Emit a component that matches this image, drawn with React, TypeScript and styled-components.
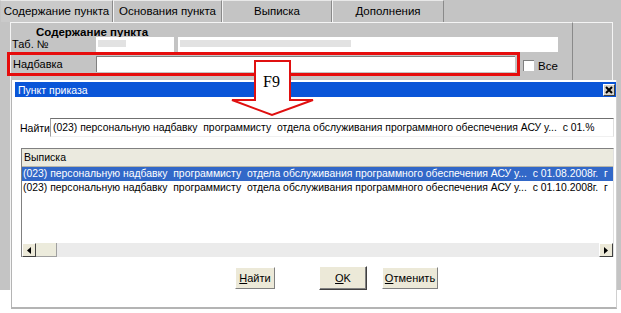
import React from "react";
import styled, { createGlobalStyle } from "styled-components";

const GlobalStyle = createGlobalStyle`
  html, body {
    margin: 0;
    padding: 0;
    background: #fff;
    font-family: "Liberation Sans", Arial, sans-serif;
  }
`;

const findText =
  "(023) персональную надбавку  программисту  отдела обслуживания программного обеспечения АСУ у...  с 01.%";

const rows = [
  "(023) персональную надбавку  программисту  отдела обслуживания программного обеспечения АСУ у...  с 01.08.2008г.  г",
  "(023) персональную надбавку  программисту  отдела обслуживания программного обеспечения АСУ у...  с 01.10.2008г.  г",
];

const tabs = [
  { title: "Содержание пункта", width: 113 },
  { title: "Основания пункта", width: 109 },
  { title: "Выписка", width: 110 },
  { title: "Дополнения", width: 112 },
];

const App: React.FC = () => {
  return (
    <Screen>
      <GlobalStyle />
      <MainWindow>
        <TabBar>
          {tabs.map((t, i) => (
            <Tab key={t.title} $width={t.width} $active={i === 0}>
              {t.title}
            </Tab>
          ))}
        </TabBar>
        <Body>
          <InnerPanel>
            <SectionTitle>Содержание пункта</SectionTitle>
            <FieldRow>
              <Label>Таб. №</Label>
              <Field $width={78}>
                <Redacted $width={28} />
              </Field>
              <Field $width={380} $gap={4}>
                <Redacted $width={171} />
              </Field>
            </FieldRow>
            <HighlightRow>
              <Highlight>
                <Label $width={83}>Надбавка</Label>
                <TextInput />
              </Highlight>
              <CheckBox />
              <CheckLabel>Все</CheckLabel>
            </HighlightRow>
          </InnerPanel>
          <RightColumn />
        </Body>
      </MainWindow>

      <Dialog>
        <TitleBar>
          <span>Пункт приказа</span>
          <CloseButton>
            <svg width="8" height="8" viewBox="0 0 8 8">
              <path d="M1 1 L7 7 M7 1 L1 7" stroke="#000" strokeWidth="2" />
            </svg>
          </CloseButton>
        </TitleBar>
        <FindRow>
          <FindLabel>Найти</FindLabel>
          <FindInput>{findText}</FindInput>
        </FindRow>
        <ListBox>
          <ListHeader>Выписка</ListHeader>
          {rows.map((r, i) => (
            <ListRow key={i} $selected={i === 0}>
              {r}
            </ListRow>
          ))}
          <ListSpacer />
          <ScrollBar>
            <ScrollButton>
              <svg width="4" height="7" viewBox="0 0 4 7">
                <path d="M4 0 L0 3.5 L4 7 Z" fill="#000" />
              </svg>
            </ScrollButton>
            <ScrollThumb />
            <ScrollTrack />
            <ScrollButton>
              <svg width="4" height="7" viewBox="0 0 4 7">
                <path d="M0 0 L4 3.5 L0 7 Z" fill="#000" />
              </svg>
            </ScrollButton>
          </ScrollBar>
        </ListBox>
        <ButtonRow>
          <Button $width={40}>
            <u>Н</u>айти
          </Button>
          <Button $width={48} $gap={44} $default>
            <u>O</u>K
          </Button>
          <Button $width={56} $gap={15}>
            <u>О</u>тменить
          </Button>
        </ButtonRow>
      </Dialog>

      <Arrow width="86" height="60" viewBox="0 0 86 60">
        <polygon
          points="25,2 60,2 60,41 83,41 42,56 2,41 25,41"
          fill="#fff"
          stroke="#e01010"
          strokeWidth="2"
        />
        <text x="33" y="28" fontFamily="'Liberation Serif', serif" fontSize="16" fill="#000">
          F9
        </text>
      </Arrow>
    </Screen>
  );
};

const Screen = styled.div`
  position: relative;
  width: 621px;
  height: 313px;
  overflow: hidden;
  background: #fff;
`;

const MainWindow = styled.div`
  width: 621px;
  height: 290px;
  background: #c4c4c4;
`;

const TabBar = styled.div`
  display: flex;
  height: 22px;
`;

const Tab = styled.div<{ $width: number; $active?: boolean }>`
  width: ${(p) => p.$width}px;
  box-sizing: border-box;
  border-top: 1px solid #e8e8e8;
  border-left: 1px solid ${(p) => (p.$active ? "#c4c4c4" : "#f4f4f4")};
  border-right: 1px solid #8a8a8a;
  background: ${(p) => (p.$active ? "#cacaca" : "#c4c4c4")};
  font-size: 11.5px;
  color: #000;
  text-align: center;
  white-space: nowrap;
  padding-top: 4px;
`;

const Body = styled.div`
  display: flex;
  padding-left: 10px;
  height: 268px;
`;

const InnerPanel = styled.div`
  width: 562px;
  box-sizing: border-box;
  border-top: 1px solid #f4f4f4;
  border-left: 1px solid #f4f4f4;
`;

const RightColumn = styled.div`
  width: 41px;
  box-sizing: border-box;
  border-top: 1px solid #f4f4f4;
  border-left: 1px solid #8a8a8a;
  border-right: 1px solid #f4f4f4;
`;

const SectionTitle = styled.div`
  font-size: 11.5px;
  font-weight: bold;
  line-height: 12px;
  height: 11px;
  padding-top: 3px;
  padding-left: 25px;
`;

const FieldRow = styled.div`
  display: flex;
  align-items: flex-start;
  height: 15px;
`;

const Label = styled.div<{ $width?: number }>`
  width: ${(p) => p.$width ?? 84}px;
  padding-left: 1px;
  font-size: 11px;
  line-height: 14px;
  color: #000;
`;

const Field = styled.div<{ $width: number; $gap?: number }>`
  width: ${(p) => p.$width}px;
  margin-left: ${(p) => p.$gap ?? 0}px;
  height: 15px;
  background: #fff;
  padding: 3px 0 0 2px;
  box-sizing: border-box;
`;

const Redacted = styled.div<{ $width: number }>`
  width: ${(p) => p.$width}px;
  height: 7px;
  background: #e2e2e2;
`;

const HighlightRow = styled.div`
  display: flex;
  align-items: center;
  margin-left: -4px;
`;

const Highlight = styled.div`
  width: 513px;
  height: 24px;
  box-sizing: border-box;
  border: 3px solid #e60d0d;
  display: flex;
  align-items: center;
  padding-left: 2px;
`;

const TextInput = styled.div`
  width: 419px;
  height: 16px;
  box-sizing: border-box;
  background: #fff;
  border-top: 1px solid #808080;
  border-left: 1px solid #808080;
`;

const CheckBox = styled.div`
  width: 10px;
  height: 10px;
  margin: 3px 0 0 3px;
  background: #fff;
  border-top: 1px solid #808080;
  border-left: 1px solid #808080;
`;

const CheckLabel = styled.span`
  font-size: 11.5px;
  margin: 3px 0 0 4px;
`;

const Dialog = styled.div`
  position: absolute;
  left: 11px;
  top: 80px;
  width: 606px;
  height: 229px;
  box-sizing: border-box;
  background: #fff;
  border-left: 1px solid #b4b4b4;
  border-bottom: 2px solid #b4b4b4;
  border-right: 1px solid #d0d0d0;
  padding-top: 2px;
`;

const TitleBar = styled.div`
  margin-left: 3px;
  height: 15px;
  background: #0a55d8;
  color: #fff;
  font-size: 10.5px;
  display: flex;
  align-items: center;
  justify-content: space-between;
  padding-left: 3px;
`;

const CloseButton = styled.div`
  width: 12px;
  height: 12px;
  box-sizing: border-box;
  margin-right: 1px;
  background: #d4d0c8;
  border-top: 1px solid #fff;
  border-left: 1px solid #fff;
  border-right: 1px solid #404040;
  border-bottom: 1px solid #404040;
  display: flex;
  align-items: center;
  justify-content: center;
`;

const FindRow = styled.div`
  display: flex;
  align-items: center;
  margin-top: 21px;
  padding-left: 8px;
`;

const FindLabel = styled.span`
  font-size: 10.5px;
  width: 30px;
`;

const FindInput = styled.div`
  width: 564px;
  height: 19px;
  box-sizing: border-box;
  border-top: 1px solid #707070;
  border-left: 1px solid #a0a0a0;
  border-right: 1px solid #e0e0e0;
  border-bottom: 1px solid #f0f0f0;
  font-size: 10.4px;
  line-height: 17px;
  padding-left: 2px;
  white-space: pre;
  overflow: hidden;
`;

const ListBox = styled.div`
  margin: 11px 0 0 9px;
  width: 593px;
  height: 109px;
  box-sizing: border-box;
  border-top: 1px solid #808080;
  border-left: 1px solid #808080;
  border-right: 1px solid #e0e0e0;
  display: flex;
  flex-direction: column;
  overflow: hidden;
`;

const ListHeader = styled.div`
  height: 18px;
  box-sizing: border-box;
  background: #ebeadf;
  border-bottom: 1px solid #b8b6a8;
  font-size: 10.5px;
  line-height: 17px;
  padding-left: 2px;
`;

const ListRow = styled.div<{ $selected?: boolean }>`
  height: 14px;
  line-height: 14px;
  font-size: 10.4px;
  padding-left: 1px;
  white-space: pre;
  overflow: hidden;
  background: ${(p) => (p.$selected ? "#3268c8" : "#fff")};
  color: ${(p) => (p.$selected ? "#fff" : "#000")};
`;

const ListSpacer = styled.div`
  flex: 1;
`;

const ScrollBar = styled.div`
  display: flex;
  height: 14px;
  background: #ebebeb;
`;

const ScrollButton = styled.div`
  width: 14px;
  height: 14px;
  box-sizing: border-box;
  background: #ece9d8;
  border: 1px solid #fff;
  border-right-color: #404040;
  border-bottom-color: #404040;
  display: flex;
  align-items: center;
  justify-content: center;
`;

const ScrollThumb = styled.div`
  width: 20px;
  background: #ecebdc;
  border-right: 1px solid #a0a0a0;
  border-bottom: 1px solid #a0a0a0;
`;

const ScrollTrack = styled.div`
  flex: 1;
`;

const ButtonRow = styled.div`
  display: flex;
  align-items: center;
  margin-top: 9px;
  padding-left: 223px;
`;

const Button = styled.div<{ $width: number; $gap?: number; $default?: boolean }>`
  width: ${(p) => p.$width}px;
  height: ${(p) => (p.$default ? 24 : 22)}px;
  margin-left: ${(p) => p.$gap ?? 0}px;
  box-sizing: border-box;
  background: #ece9d8;
  border: 1px solid #fff;
  border-right-color: ${(p) => (p.$default ? "#404040" : "#808080")};
  border-bottom-color: ${(p) => (p.$default ? "#404040" : "#808080")};
  ${(p) => (p.$default ? "box-shadow: inset -1px -1px 0 #808080;" : "")}
  font-size: 11px;
  display: flex;
  align-items: center;
  justify-content: center;
`;

const Arrow = styled.svg`
  position: absolute;
  left: 230px;
  top: 59px;
`;

export default App;
